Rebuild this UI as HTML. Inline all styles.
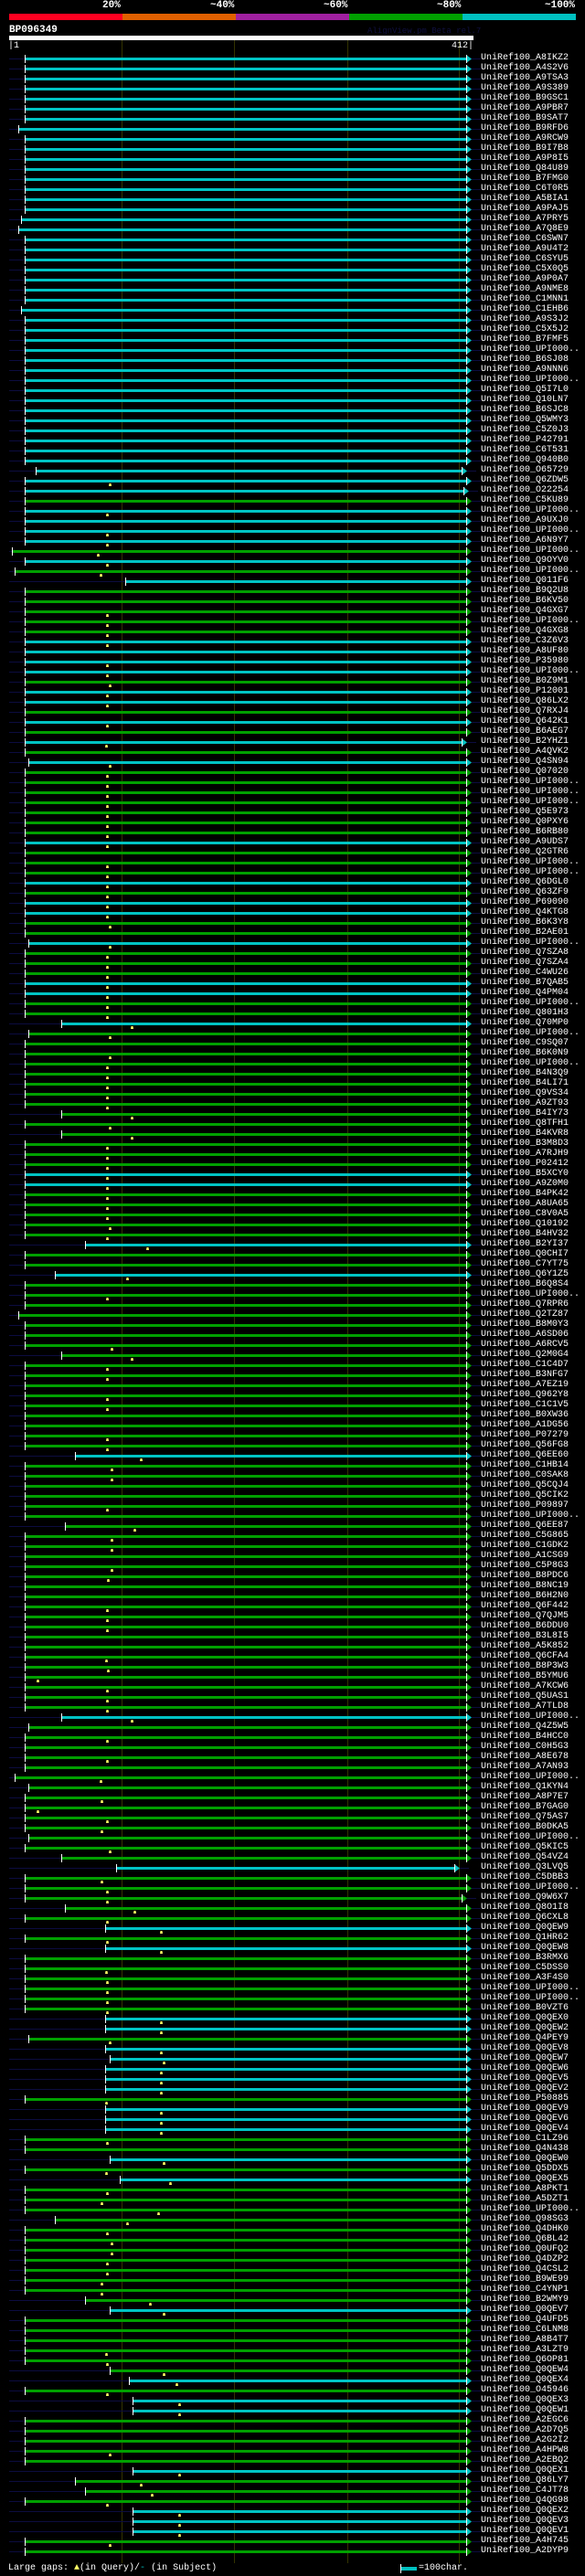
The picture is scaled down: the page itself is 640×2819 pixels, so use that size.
<!DOCTYPE html>
<html><head><meta charset="utf-8">
<style>
html,body{margin:0;padding:0;background:#000;}
body{width:640px;height:2819px;position:relative;overflow:hidden;font-family:"Liberation Mono",monospace;color:#fff;}
.lbl{position:absolute;top:0;font-size:11px;font-weight:bold;line-height:12px;}
#names{position:absolute;left:526px;top:58px;margin:0;font-size:10px;line-height:11px;color:#fff;font-family:"Liberation Mono",monospace;white-space:pre;}
svg{position:absolute;left:0;top:0;}
</style></head><body>
<svg id="g" width="640" height="2819" xmlns="http://www.w3.org/2000/svg">
<rect x="10" y="15" width="124" height="7" fill="#ff0020"/>
<rect x="134" y="15" width="124" height="7" fill="#e06000"/>
<rect x="258" y="15" width="124" height="7" fill="#a020a0"/>
<rect x="382" y="15" width="124" height="7" fill="#00a000"/>
<rect x="506" y="15" width="124" height="7" fill="#00c0c0"/>
<rect x="10" y="39" width="508" height="5" fill="#fff"/>
<g stroke="#333300" stroke-width="1">
<line x1="133.5" y1="44" x2="133.5" y2="2805"/>
<line x1="256.5" y1="44" x2="256.5" y2="2805"/>
<line x1="380.5" y1="44" x2="380.5" y2="2805"/>
<line x1="502.5" y1="44" x2="502.5" y2="2805"/>
</g>
<g id="rows"></g>
<rect x="439" y="2809" width="17" height="4" fill="#00c0c0"/>
<rect x="438" y="2806" width="1" height="10" fill="#fff"/>
</svg>
<div class="lbl" style="left:112px">20%</div>
<div class="lbl" style="left:230px">~40%</div>
<div class="lbl" style="left:354px">~60%</div>
<div class="lbl" style="left:478px">~80%</div>
<div class="lbl" style="left:596px">~100%</div>
<div style="position:absolute;left:10px;top:27px;font-size:11px;font-weight:bold;">BP096349</div>
<div style="position:absolute;left:402px;top:29px;font-size:9px;color:#101040;">AlignView.pm Beta rel.7</div>
<div style="position:absolute;left:9px;top:45px;font-size:10px;">|1</div>
<div style="position:absolute;left:494px;top:45px;font-size:10px;">412|</div>
<div style="position:absolute;left:9px;top:2805px;font-size:10px;">Large gaps: <span style="color:#ffff66">&#9650;</span>(in Query)/<span style="color:#00c0c0">-</span> (in Subject)</div>
<div style="position:absolute;left:458px;top:2805px;font-size:10px;">=100char.</div>
<pre id="names">UniRef100_A8IKZ2
UniRef100_A4S2V6
UniRef100_A9TSA3
UniRef100_A9S389
UniRef100_B9GSC1
UniRef100_A9PBR7
UniRef100_B9SAT7
UniRef100_B9RFD6
UniRef100_A9RCW9
UniRef100_B9I7B8
UniRef100_A9P8I5
UniRef100_Q84U89
UniRef100_B7FMG0
UniRef100_C6T0R5
UniRef100_A5BIA1
UniRef100_A9PAJ5
UniRef100_A7PRY5
UniRef100_A7Q8E9
UniRef100_C6SWN7
UniRef100_A9U4T2
UniRef100_C6SYU5
UniRef100_C5X0Q5
UniRef100_A9P0A7
UniRef100_A9NME8
UniRef100_C1MNN1
UniRef100_C1EHB6
UniRef100_A9S3J2
UniRef100_C5X5J2
UniRef100_B7FMF5
UniRef100_UPI000..
UniRef100_B6SJ08
UniRef100_A9NNN6
UniRef100_UPI000..
UniRef100_Q5I7L0
UniRef100_Q10LN7
UniRef100_B6SJC8
UniRef100_Q5WMY3
UniRef100_C5Z0J3
UniRef100_P42791
UniRef100_C6T531
UniRef100_Q940B0
UniRef100_O65729
UniRef100_Q6ZDW5
UniRef100_O22254
UniRef100_C5KU89
UniRef100_UPI000..
UniRef100_A9UXJ0
UniRef100_UPI000..
UniRef100_A6N9Y7
UniRef100_UPI000..
UniRef100_Q9OYV0
UniRef100_UPI000..
UniRef100_Q011F6
UniRef100_B9Q2U8
UniRef100_B6KV50
UniRef100_Q4GXG7
UniRef100_UPI000..
UniRef100_Q4GXG8
UniRef100_C3Z6V3
UniRef100_A8UF80
UniRef100_P35980
UniRef100_UPI000..
UniRef100_B0Z9M1
UniRef100_P12001
UniRef100_Q86LX2
UniRef100_Q7RXJ4
UniRef100_Q642K1
UniRef100_B6AEG7
UniRef100_B2YHZ1
UniRef100_A4QVK2
UniRef100_Q4SN94
UniRef100_Q07020
UniRef100_UPI000..
UniRef100_UPI000..
UniRef100_UPI000..
UniRef100_Q5E973
UniRef100_Q0PXY6
UniRef100_B6RB80
UniRef100_A9UDS7
UniRef100_Q2GTR6
UniRef100_UPI000..
UniRef100_UPI000..
UniRef100_Q6DGL0
UniRef100_Q63ZF9
UniRef100_P69090
UniRef100_Q4KTG8
UniRef100_B6K3Y8
UniRef100_B2AE01
UniRef100_UPI000..
UniRef100_Q7SZA8
UniRef100_Q7SZA4
UniRef100_C4WU26
UniRef100_B7QAB5
UniRef100_Q4PM04
UniRef100_UPI000..
UniRef100_Q801H3
UniRef100_Q70MP0
UniRef100_UPI000..
UniRef100_C9SQ07
UniRef100_B6K0N9
UniRef100_UPI000..
UniRef100_B4N3Q9
UniRef100_B4LI71
UniRef100_Q9VS34
UniRef100_A9ZT93
UniRef100_B4IY73
UniRef100_Q8TFH1
UniRef100_B4KVR8
UniRef100_B3M8D3
UniRef100_A7RJH9
UniRef100_P02412
UniRef100_B5XCY0
UniRef100_A9Z0M0
UniRef100_B4PK42
UniRef100_A8UA65
UniRef100_C8V0A5
UniRef100_Q10192
UniRef100_B4HV32
UniRef100_B2YI37
UniRef100_Q0CHI7
UniRef100_C7YT75
UniRef100_Q6Y1Z5
UniRef100_B6Q8S4
UniRef100_UPI000..
UniRef100_Q7RPR6
UniRef100_Q2TZ87
UniRef100_B8M0Y3
UniRef100_A6SD06
UniRef100_A6RCV5
UniRef100_Q2M0G4
UniRef100_C1C4D7
UniRef100_B3NFG7
UniRef100_A7EZ19
UniRef100_Q962Y8
UniRef100_C1C1V5
UniRef100_B0XW36
UniRef100_A1DG56
UniRef100_P07279
UniRef100_Q56FG8
UniRef100_Q6EE60
UniRef100_C1HB14
UniRef100_C0SAK8
UniRef100_Q5CQJ4
UniRef100_Q5CIK2
UniRef100_P09897
UniRef100_UPI000..
UniRef100_Q6EE87
UniRef100_C5G865
UniRef100_C1GDK2
UniRef100_A1CSG9
UniRef100_C5P8G3
UniRef100_B8PDC6
UniRef100_B8NC19
UniRef100_B6H2N0
UniRef100_Q6F442
UniRef100_Q7QJM5
UniRef100_B6DDU0
UniRef100_B3L8I5
UniRef100_A5K852
UniRef100_Q6CFA4
UniRef100_B8P3W3
UniRef100_B5YMU6
UniRef100_A7KCW6
UniRef100_Q5UAS1
UniRef100_A7TLD8
UniRef100_UPI000..
UniRef100_Q4Z5W5
UniRef100_B4HCC0
UniRef100_C0H5G3
UniRef100_A8E678
UniRef100_A7AN93
UniRef100_UPI000..
UniRef100_Q1KYN4
UniRef100_A8P7E7
UniRef100_B7GAG0
UniRef100_Q75AS7
UniRef100_B0DKA5
UniRef100_UPI000..
UniRef100_Q5KIC5
UniRef100_Q54VZ4
UniRef100_Q3LVQ5
UniRef100_C5DBB3
UniRef100_UPI000..
UniRef100_Q9W6X7
UniRef100_Q8O1I8
UniRef100_Q6CXL8
UniRef100_Q0QEW9
UniRef100_Q1HR62
UniRef100_Q0QEW8
UniRef100_B3RMX6
UniRef100_C5DSS0
UniRef100_A3F4S0
UniRef100_UPI000..
UniRef100_UPI000..
UniRef100_B0VZT6
UniRef100_Q0QEX0
UniRef100_Q0QEW2
UniRef100_Q4PEY9
UniRef100_Q0QEV8
UniRef100_Q0QEW7
UniRef100_Q0QEW6
UniRef100_Q0QEV5
UniRef100_Q0QEV2
UniRef100_P50885
UniRef100_Q0QEV9
UniRef100_Q0QEV6
UniRef100_Q0QEV4
UniRef100_C1LZ96
UniRef100_Q4N438
UniRef100_Q0QEW0
UniRef100_Q5DDX5
UniRef100_Q0QEX5
UniRef100_A8PKT1
UniRef100_A5DZT1
UniRef100_UPI000..
UniRef100_Q98SG3
UniRef100_Q4DHK0
UniRef100_Q6BL42
UniRef100_Q0UFQ2
UniRef100_Q4DZP2
UniRef100_Q4CSL2
UniRef100_B9WE99
UniRef100_C4YNP1
UniRef100_B2WMY9
UniRef100_Q0QEV7
UniRef100_Q4UFD5
UniRef100_C6LNM8
UniRef100_A8B4T7
UniRef100_A3LZT9
UniRef100_Q6OP81
UniRef100_Q0QEW4
UniRef100_Q0QEX4
UniRef100_O45946
UniRef100_Q0QEX3
UniRef100_Q0QEW1
UniRef100_A2EGC6
UniRef100_A2D7Q5
UniRef100_A2G2I2
UniRef100_A4HPW8
UniRef100_A2EBQ2
UniRef100_Q0QEX1
UniRef100_Q86LY7
UniRef100_C4JT78
UniRef100_Q4QG98
UniRef100_Q0QEX2
UniRef100_Q0QEV3
UniRef100_Q0QEV1
UniRef100_A4H745
UniRef100_A2DYP9</pre>
<script>
(function(){
var D=[];
function add(n,s){for(var i=0;i<n;i++)D.push(s);}
add(7,"c,27");add(1,"c,20");add(8,"c,27");add(1,"c,23");add(1,"c,20");add(7,"c,27");add(1,"c,23");add(15,"c,27");
D.push("c,39,,505","c,27,120","c,27,,507","g,27","c,27,117","c,27","c,27,117","c,27,117","g,13,107","c,27,117","g,16,110","c,137","g,27","g,27");
add(3,"g,27,117");
D.push("c,27,117","c,27","c,27,117","c,27,117","g,27,120","c,27,117","c,27,117","g,27","c,27,117","g,27","c,27,116,505","g,27","c,31,120");
add(7,"g,27,117");
D.push("c,27,117","g,27","g,27,117","g,27,117","c,27,117","g,27,117","c,27,117","c,27,117","g,27,120","g,27","c,31,120");
add(3,"g,27,117");
D.push("c,27,117","c,27,117","g,27,117","g,27,117","c,67,144","g,31,120","g,27","g,27,120");
add(5,"g,27,117");
D.push("g,67,144","g,27,120","g,67,144");
add(3,"g,27,117");
D.push("c,27,117","c,27,117");
add(3,"g,27,117");
D.push("g,27,120","g,27,117","c,93,161","g,27","g,27","c,60,139","g,27","g,27,117","g,27","g,20","g,27","g,27","g,27,122","g,67,144","g,27,117","g,27,117","g,27","g,27,117","g,27,117","g,27","g,27","g,27,117","g,27,117","c,82,154","g,27,122","g,27,122","g,27","g,27","g,27,117","g,27","g,71,147","g,27,122","g,27,122","g,27","g,27,122","g,27,118","g,27","g,27");
add(3,"g,27,117");
D.push("g,27","g,27","g,27,116","g,27,118","g,27,41");
add(3,"g,27,117");
D.push("c,67,144","g,31","g,27,117","g,27","g,27,117","g,27","g,16,110","g,31","g,27,111","g,27,41","g,27,117","g,27,111","g,31","g,27,120","g,67","c,127,,497","g,27,111","g,27,117","g,27,117,505","g,71,147","g,27,117","c,115,176","g,27,117","c,115,176","g,27","g,27,116");
add(4,"g,27,117");
D.push("c,115,176","c,115,176","g,31,120","c,115,176","c,120,179");
add(3,"c,115,176");
D.push("g,27,116");
add(3,"c,115,176");
D.push("g,27,117","g,27","c,120,179","g,27,116","c,131,186","g,27,117","g,27,111","g,27,173","g,60,139","g,27,117","g,27,122","g,27,122","g,27,117","g,27,117","g,27,111","g,27,111","g,93,164","c,120,179","g,27","g,27","g,27","g,27,116","g,27,117","g,120,179","c,141,193","g,27,117","c,145,196","c,145,196","g,27","g,27","g,27","g,27,120","g,27","c,145,196","g,82,154","g,93,166","g,27,117");
add(3,"c,145,196");
D.push("g,27,120","g,27");
var h=[];
for(var i=0;i<D.length;i++){
 var p=D[i].split(","),col=p[0]=="c"?"#00c4c4":"#00a000",s=+p[1],m=p[2]?+p[2]:0,e=p[3]?+p[3]:510;
 var y=64+11*i;
 h.push('<rect x="10" y="'+(y)+'" width="'+(s-10)+'" height="1" fill="#0c0c40"/>');
 h.push('<rect x="'+(e+6)+'" y="'+(y)+'" width="10" height="1" fill="#0c0c40"/>');
 h.push('<rect x="'+s+'" y="'+(y-1)+'" width="'+(e-s)+'" height="3" fill="'+col+'"/>');
 h.push('<polygon points="'+e+','+(y-4)+' '+(e+6)+','+(y+0.5)+' '+e+','+(y+5)+'" fill="'+col+'"/>');
 h.push('<rect x="'+e+'" y="'+(y-4)+'" width="1" height="9" fill="#fff"/>');
 h.push('<rect x="'+s+'" y="'+(y-4)+'" width="1" height="9" fill="#fff"/>');
 if(m)h.push('<polygon points="'+(m-0.5)+','+(y+3)+' '+(m+1.5)+','+(y+3)+' '+(m+2)+','+(y+6)+' '+(m-1)+','+(y+6)+'" fill="#ffff66"/>');
}
document.getElementById("rows").innerHTML=h.join("");
})();
</script>
</body></html>
